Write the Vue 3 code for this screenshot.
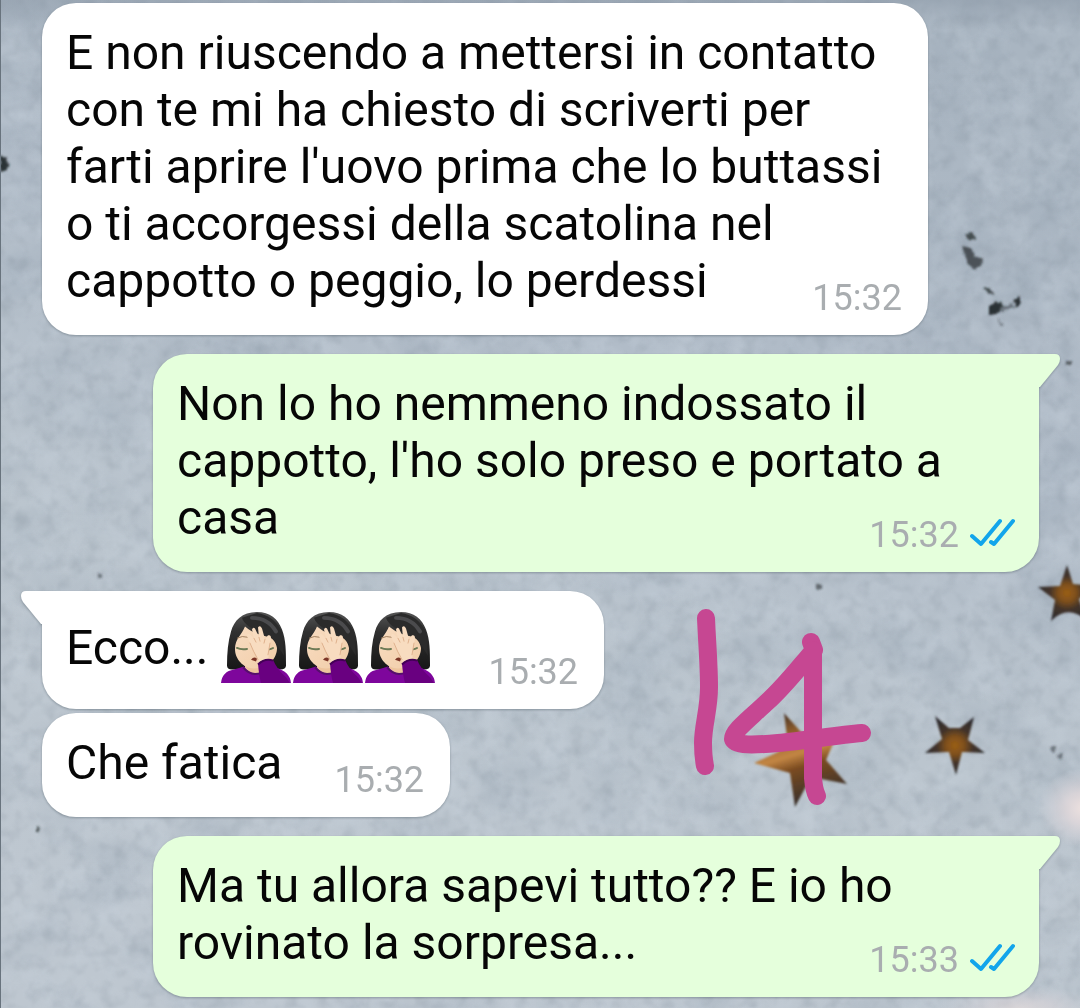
<script setup>
const messages = [
  { id: 1, side: 'in', text: "E non riuscendo a mettersi in contatto con te mi ha chiesto di scriverti per farti aprire l'uovo prima che lo buttassi o ti accorgessi della scatolina nel cappotto o peggio, lo perdessi", time: '15:32' },
  { id: 2, side: 'out', tail: true, text: "Non lo ho nemmeno indossato il cappotto, l'ho solo preso e portato a casa", time: '15:32' },
  { id: 3, side: 'in', tail: true, text: 'Ecco...', emoji: 3, time: '15:32' },
  { id: 4, side: 'in', joined: true, text: 'Che fatica', time: '15:32' },
  { id: 5, side: 'out', tail: true, text: 'Ma tu allora sapevi tutto?? E io ho rovinato la sorpresa...', time: '15:33' },
]
</script>

<template>
  <main class="chat">
    <svg class="wallpaper" viewBox="0 0 1080 1008" preserveAspectRatio="xMinYMin slice" aria-hidden="true">
      <defs>
        <linearGradient id="wall" x1="0.7" y1="0" x2="0.4" y2="1">
          <stop offset="0" stop-color="#a9b5c1" />
          <stop offset="0.35" stop-color="#b1bcc8" />
          <stop offset="0.65" stop-color="#bbc5ce" />
          <stop offset="1" stop-color="#bec7d0" />
        </linearGradient>
        <linearGradient id="dim" x1="0" y1="0" x2="0" y2="1">
          <stop offset="0" stop-color="#8a97a5" stop-opacity="0.5" />
          <stop offset="1" stop-color="#8a97a5" stop-opacity="0" />
        </linearGradient>
        <radialGradient id="glow">
          <stop offset="0" stop-color="#efe2e0" />
          <stop offset="0.4" stop-color="#e2d9dc" stop-opacity="0.8" />
          <stop offset="1" stop-color="#d8d5dc" stop-opacity="0" />
        </radialGradient>
        <radialGradient id="gold">
          <stop offset="0" stop-color="#9a5f17" />
          <stop offset="0.3" stop-color="#80501c" />
          <stop offset="0.6" stop-color="#423329" />
          <stop offset="1" stop-color="#2e2b2e" />
        </radialGradient>
        <linearGradient id="copper" x1="0.1" y1="0" x2="0.4" y2="1">
          <stop offset="0" stop-color="#2f2724" />
          <stop offset="0.25" stop-color="#8a5a2b" />
          <stop offset="0.5" stop-color="#c38644" />
          <stop offset="0.64" stop-color="#7a4b20" />
          <stop offset="1" stop-color="#38302c" />
        </linearGradient>
        <filter id="clouds" x="0" y="0" width="100%" height="100%" color-interpolation-filters="sRGB">
          <feTurbulence type="fractalNoise" baseFrequency="0.012 0.016" numOctaves="5" seed="8" />
          <feColorMatrix values="0 0 0 0 0.54  0 0 0 0 0.6  0 0 0 0 0.66  2 0 0 0 -0.85" />
        </filter>
        <filter id="grain" x="0" y="0" width="100%" height="100%" color-interpolation-filters="sRGB">
          <feTurbulence type="fractalNoise" baseFrequency="0.07" numOctaves="4" seed="21" />
          <feColorMatrix values="0 0 0 0 0.42  0 0 0 0 0.47  0 0 0 0 0.52  1 0 0 0 -0.46" />
          <feGaussianBlur stdDeviation="0.8" />
        </filter>
        <filter id="light" x="0" y="0" width="100%" height="100%" color-interpolation-filters="sRGB">
          <feTurbulence type="fractalNoise" baseFrequency="0.03" numOctaves="5" seed="5" />
          <feColorMatrix values="0 0 0 0 0.8  0 0 0 0 0.84  0 0 0 0 0.88  0 1.6 0 0 -0.65" />
        </filter>
        <filter id="soft"><feGaussianBlur stdDeviation="1" /></filter>
        <filter id="rough" x="-20%" y="-20%" width="140%" height="140%">
          <feTurbulence type="fractalNoise" baseFrequency="0.2" numOctaves="2" seed="3" />
          <feDisplacementMap in="SourceGraphic" scale="5" xChannelSelector="R" yChannelSelector="G" />
          <feGaussianBlur stdDeviation="1" />
        </filter>
      </defs>
      <rect width="1080" height="1008" fill="url(#wall)" />
      <rect width="1080" height="1008" filter="url(#clouds)" opacity="0.3" />
      <rect width="1080" height="1008" filter="url(#light)" opacity="0.45" />
      <rect width="1080" height="1008" filter="url(#grain)" opacity="0.45" />
      <rect width="1080" height="30" fill="url(#dim)" />
      <ellipse cx="1084" cy="808" rx="46" ry="40" fill="url(#glow)" />
      <ellipse cx="1020" cy="1008" rx="80" ry="22" fill="url(#glow)" opacity="0.6" />

      <g filter="url(#rough)" fill="#2c3235">
        <path d="M0 155l5 3 5 7-4 5-6 2z" />
        <path d="M965 234l7-1 4 6-6 3z" opacity="0.8" />
        <path d="M962 246l9 2 5 9 7 2-2 6-6 5-7-6z" opacity="0.75" />
        <path d="M984 288l5 0 5 7-5-1z" opacity="0.8" />
        <path d="M989 307l8-7 6 6-6 8-8 1z" />
        <path d="M999 306l14-2 2 3-15 4z" opacity="0.5" />
        <path d="M1013 300l6-3 3 6-6 4z" />
        <path d="M997 318l7 6-3 2z" opacity="0.4" />
        <path d="M1065 361l6-1 0 5-5 1z" opacity="0.7" />
        <path d="M1050 746l5 0 0 5-4 0zM1056 755l6-1-2 6z" opacity="0.5" />
        <path d="M816 584l5 0 0 5-5 0z" opacity="0.6" />
        <path d="M97 574l5 0 0 4-5 0z" opacity="0.5" />
        <path d="M36 826l3 0 1 6-3 0z" opacity="0.8" />
      </g>

      <g filter="url(#soft)">
        <path d="M935 716L949 728L960 728L974 717L968 740L985 753L962 752L956 775L949 752L925 753L942 739Z" fill="url(#gold)" />
        <path d="M1067 565L1073 584L1096 586L1079 599L1086 620Q1068 604 1051 621L1055 600L1038 587L1060 586Z" fill="url(#gold)" />
        <path d="M784 713L802 733L833 744L826 760L847 784L811 777L795 807L790 773L754 763L776 753L788 745Z" fill="url(#copper)" />
      </g>
      <rect width="1" height="1008" fill="#68737d" />
    </svg>

    <svg class="scribble" viewBox="0 0 1080 1008" preserveAspectRatio="xMinYMin slice" role="img" aria-label="14">
      <g fill="none" stroke="#c64792" stroke-width="18" stroke-linecap="round" stroke-linejoin="round">
        <path d="M706 618C707 642 709 665 709 687C709 710 703 725 703 743Q703 756 705 766" />
        <path d="M811 642L814 650C796 671 784 687 766 703C748 720 733 731 733 739C735 746 755 745 778 743C805 741 835 735 862 733" />
        <path d="M813 650V778Q814 790 817 796" />
      </g>
    </svg>

    <article
      v-for="m in messages"
      :key="m.id"
      class="bubble"
      :class="[m.side, { tailed: m.tail, joined: m.joined }]"
    >
      <svg v-if="m.tail" class="tail" viewBox="0 0 22 34" aria-hidden="true">
        <path d="M0 0H16Q21 0 21 5Q21 8 19 11L1 33H0Z" />
      </svg>
      <div class="text">
        <template v-if="!m.emoji">{{ m.text }}</template>
        <span v-else class="row">
          <span>{{ m.text }}</span>
          <span class="emojis">
            <svg v-for="n in m.emoji" :key="n" class="emoji" viewBox="0 0 72 73" preserveAspectRatio="none" role="img" aria-label="Donna che si copre il volto">
              <defs>
                <linearGradient :id="'hair' + n" x1="0" y1="0" x2="0" y2="1">
                  <stop offset="0" stop-color="#555" />
                  <stop offset="0.35" stop-color="#303030" />
                  <stop offset="1" stop-color="#171717" />
                </linearGradient>
                <linearGradient :id="'skin' + n" x1="0" y1="0" x2="1" y2="1">
                  <stop offset="0" stop-color="#f8dcc1" />
                  <stop offset="1" stop-color="#f1cda8" />
                </linearGradient>
              </defs>
              <path :fill="'url(#hair' + n + ')'" d="M37 0C22 0 14 9 11 20C8 30 7 42 7 55Q7 59 12 59H60Q66 59 66 55C66 40 66 29 62 18C58 7 50 0 37 0Z" />
              <path fill="#edc49d" d="M25 51H42V62Q35 68 25 63Z" />
              <path :fill="'url(#skin' + n + ')'" d="M25 15C22 23 15 28 15 38C15 48 23 58 34 58C48 58 57 48 57 37C56 31 53 29 52 26C43 25 33 22 25 15Z" />
              <path fill="#2b2b2b" d="M22 6C24 14 36 20 48 25Q56 29 59 37L64 45L62 20Q53 3 37 1Z" />
              <path fill="none" stroke="#88888b" stroke-width="4" stroke-linecap="round" opacity="0.35" d="M32 6Q48 6 56 20" />
              <path fill="none" stroke="#6d7a55" stroke-width="2" stroke-linecap="round" d="M17 37Q21 39 27 38M48 38Q50 39 53 37" />
              <path fill="none" stroke="#a2805f" stroke-width="1" d="M17 27Q22 24 28 26" />
              <path fill="#7b3527" d="M31 49Q34 45 37 48L36 51Z" />
              <path fill="#7e069c" d="M1 73Q2 61 14 59L24 56Q31 66 42 62L55 57Q70 61 71 73Z" />
              <path fill="none" stroke="#55106b" stroke-width="2" d="M23 57Q31 67 42 62" />
              <path fill="#f8dcc0" d="M39 54C38 46 32 39 30 32L27 25Q27 21 30 23L34 27L32 18Q33 15 35 17L39 26L38 16Q40 13 42 17L45 28L48 24Q51 23 51 27L49 39Q48 47 49 52Z" />
              <path fill="none" stroke="#deb18d" stroke-width="1" stroke-linecap="round" d="M34 27L36 31M39 26L40 30M45 28L44 32M30 32Q33 40 38 49M50 32L48 44" />
              <path fill="#690080" d="M38 53Q43 48 53 49Q57 59 66 67L70 73H41Q39 66 38 53Z" />
              <path fill="none" stroke="#430056" stroke-width="2" d="M38 54Q45 47 53 50" />
            </svg>
          </span>
        </span>
        <span class="meta">
          <time>{{ m.time }}</time>
          <svg v-if="m.side === 'out'" class="ticks" viewBox="0 0 46 30" role="img" aria-label="Letto">
            <path d="M3 18L12 26L31 3M22 24L25 26L44 3" />
          </svg>
        </span>
      </div>
    </article>
  </main>
</template>

<style>
body {
  margin: 0;
  background: #bac4ce;
}
</style>

<style scoped>
.chat {
  position: relative;
  box-sizing: border-box;
  min-height: 100vh;
  padding: 3px 41px 11px 42px;
  display: flex;
  flex-direction: column;
  gap: 19px;
  overflow: hidden;
  font-family: Roboto, "Noto Sans", sans-serif;
}

.wallpaper,
.scribble {
  position: absolute;
  inset: 0;
  width: 100%;
  height: 100%;
}

.bubble {
  position: relative;
  box-sizing: border-box;
  max-width: calc(100% - 111px);
  padding: 21px 24px 26px;
  border-radius: 34px;
  filter: drop-shadow(0 1px 1px rgba(60, 75, 85, 0.4));
}

.in {
  align-self: flex-start;
  padding-right: 26px;
  background: #fff;
  color: #fff;
}

.out {
  align-self: flex-end;
  background: #e5ffdc;
  color: #e5ffdc;
}

.in.tailed {
  border-top-left-radius: 0;
}

.out.tailed {
  border-top-right-radius: 0;
}

.joined {
  margin-top: -15px;
}

.tail {
  position: absolute;
  top: 0;
  width: 22px;
  height: 34px;
  fill: currentColor;
}

.out .tail {
  left: 100%;
}

.in .tail {
  right: 100%;
  transform: scaleX(-1);
}

.text {
  display: flow-root;
  color: #060606;
  font-size: 48px;
  line-height: 57px;
}

.row {
  display: inline-flex;
  align-items: center;
  gap: 12px;
}

.emojis {
  display: flex;
}

.emoji {
  width: 72px;
  height: 71px;
}

/* the time floats into the free end of the last line */
.meta {
  float: right;
  display: flex;
  align-items: center;
  gap: 10px;
  margin: 25px 0 -10px 52px;
  color: #a9adb0;
  font-size: 36px;
  line-height: 42px;
}

.row + .meta {
  margin-top: 39px;
}

.ticks {
  width: 46px;
  height: 30px;
  margin-bottom: 4px;
  fill: none;
  stroke: #12a5eb;
  stroke-width: 4;
  stroke-linecap: round;
  stroke-linejoin: round;
}
</style>
